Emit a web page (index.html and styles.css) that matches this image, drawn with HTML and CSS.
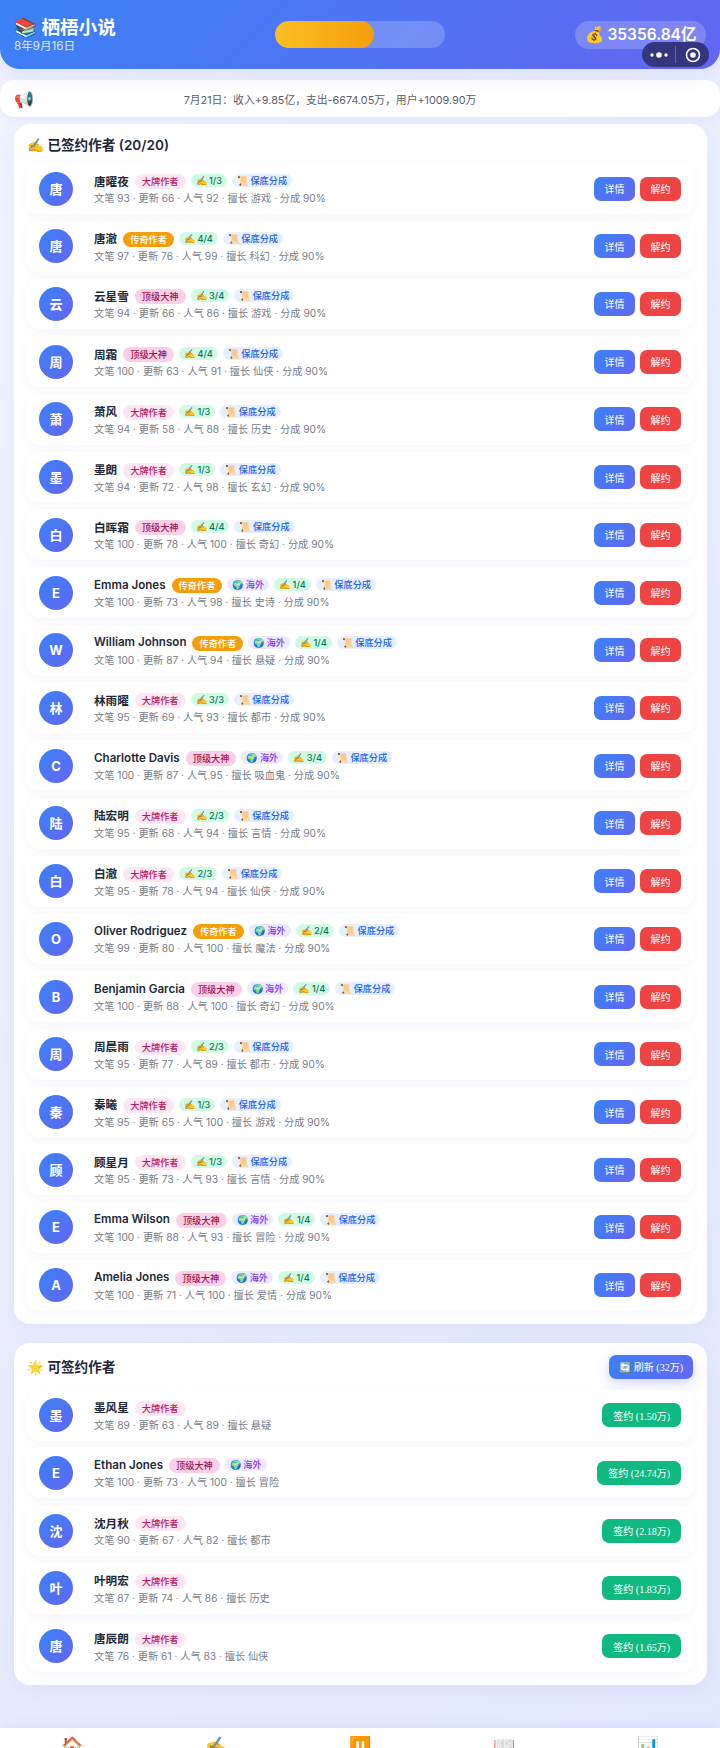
FILE: index.html
```html
<!DOCTYPE html>
<html lang="zh">
<head>
<meta charset="utf-8">
<title>栖梧小说</title>
<link rel="stylesheet" href="styles.css">
</head>
<body>
<header class="hdr">
  <div class="brand"><div class="logo">📚 栖梧小说</div><div class="date">8年9月16日</div></div>
  <div class="prog"><div class="prog-fill"></div></div>
  <div class="money">💰 35356.84亿</div>
  <div class="capsule">
    <svg class="cap-dots" width="20" height="8" viewBox="0 0 20 8"><circle cx="3" cy="4" r="1.7" fill="#fff"/><circle cx="10" cy="4" r="2.8" fill="#fff"/><circle cx="17" cy="4" r="1.7" fill="#fff"/></svg>
    <span class="cap-sep"></span>
    <svg class="cap-rec" width="16" height="16" viewBox="0 0 16 16"><circle cx="8" cy="8" r="6.5" fill="none" stroke="#fff" stroke-width="1.6"/><circle cx="8" cy="8" r="2.8" fill="#fff"/></svg>
  </div>
</header>
<div class="notice"><span class="notice-ic">📢</span><span class="notice-tx">7月21日：收入+9.85亿，支出-6674.05万，用户+1009.90万</span></div>
<section class="panel">
  <h2 class="ptitle">✍️ 已签约作者 (20/20)</h2>
  <div class="list">
    <div class="card"><div class="av">唐</div><div class="info"><div class="line"><span class="nm">唐曜夜</span><span class="tg t-big">大牌作者</span><span class="tg t-sign">✍️ 1/3</span><span class="tg t-gua">📜 保底分成</span></div><div class="sub">文笔 93 · 更新 66 · 人气 92 · 擅长 游戏 · 分成 90%</div></div><button class="btn b-blue">详情</button><button class="btn b-red">解约</button></div>
    <div class="card"><div class="av">唐</div><div class="info"><div class="line"><span class="nm">唐澈</span><span class="tg t-leg">传奇作者</span><span class="tg t-sign">✍️ 4/4</span><span class="tg t-gua">📜 保底分成</span></div><div class="sub">文笔 97 · 更新 76 · 人气 99 · 擅长 科幻 · 分成 90%</div></div><button class="btn b-blue">详情</button><button class="btn b-red">解约</button></div>
    <div class="card"><div class="av">云</div><div class="info"><div class="line"><span class="nm">云星雪</span><span class="tg t-top">顶级大神</span><span class="tg t-sign">✍️ 3/4</span><span class="tg t-gua">📜 保底分成</span></div><div class="sub">文笔 94 · 更新 66 · 人气 86 · 擅长 游戏 · 分成 90%</div></div><button class="btn b-blue">详情</button><button class="btn b-red">解约</button></div>
    <div class="card"><div class="av">周</div><div class="info"><div class="line"><span class="nm">周霜</span><span class="tg t-top">顶级大神</span><span class="tg t-sign">✍️ 4/4</span><span class="tg t-gua">📜 保底分成</span></div><div class="sub">文笔 100 · 更新 63 · 人气 91 · 擅长 仙侠 · 分成 90%</div></div><button class="btn b-blue">详情</button><button class="btn b-red">解约</button></div>
    <div class="card"><div class="av">萧</div><div class="info"><div class="line"><span class="nm">萧风</span><span class="tg t-big">大牌作者</span><span class="tg t-sign">✍️ 1/3</span><span class="tg t-gua">📜 保底分成</span></div><div class="sub">文笔 94 · 更新 58 · 人气 88 · 擅长 历史 · 分成 90%</div></div><button class="btn b-blue">详情</button><button class="btn b-red">解约</button></div>
    <div class="card"><div class="av">墨</div><div class="info"><div class="line"><span class="nm">墨朗</span><span class="tg t-big">大牌作者</span><span class="tg t-sign">✍️ 1/3</span><span class="tg t-gua">📜 保底分成</span></div><div class="sub">文笔 94 · 更新 72 · 人气 98 · 擅长 玄幻 · 分成 90%</div></div><button class="btn b-blue">详情</button><button class="btn b-red">解约</button></div>
    <div class="card"><div class="av">白</div><div class="info"><div class="line"><span class="nm">白晖霜</span><span class="tg t-top">顶级大神</span><span class="tg t-sign">✍️ 4/4</span><span class="tg t-gua">📜 保底分成</span></div><div class="sub">文笔 100 · 更新 78 · 人气 100 · 擅长 奇幻 · 分成 90%</div></div><button class="btn b-blue">详情</button><button class="btn b-red">解约</button></div>
    <div class="card"><div class="av">E</div><div class="info"><div class="line"><span class="nm">Emma Jones</span><span class="tg t-leg">传奇作者</span><span class="tg t-sea">🌍 海外</span><span class="tg t-sign">✍️ 1/4</span><span class="tg t-gua">📜 保底分成</span></div><div class="sub">文笔 100 · 更新 73 · 人气 98 · 擅长 史诗 · 分成 90%</div></div><button class="btn b-blue">详情</button><button class="btn b-red">解约</button></div>
    <div class="card"><div class="av">W</div><div class="info"><div class="line"><span class="nm">William Johnson</span><span class="tg t-leg">传奇作者</span><span class="tg t-sea">🌍 海外</span><span class="tg t-sign">✍️ 1/4</span><span class="tg t-gua">📜 保底分成</span></div><div class="sub">文笔 100 · 更新 87 · 人气 94 · 擅长 悬疑 · 分成 90%</div></div><button class="btn b-blue">详情</button><button class="btn b-red">解约</button></div>
    <div class="card"><div class="av">林</div><div class="info"><div class="line"><span class="nm">林雨曜</span><span class="tg t-big">大牌作者</span><span class="tg t-sign">✍️ 3/3</span><span class="tg t-gua">📜 保底分成</span></div><div class="sub">文笔 95 · 更新 69 · 人气 93 · 擅长 都市 · 分成 90%</div></div><button class="btn b-blue">详情</button><button class="btn b-red">解约</button></div>
    <div class="card"><div class="av">C</div><div class="info"><div class="line"><span class="nm">Charlotte Davis</span><span class="tg t-top">顶级大神</span><span class="tg t-sea">🌍 海外</span><span class="tg t-sign">✍️ 3/4</span><span class="tg t-gua">📜 保底分成</span></div><div class="sub">文笔 100 · 更新 87 · 人气 95 · 擅长 吸血鬼 · 分成 90%</div></div><button class="btn b-blue">详情</button><button class="btn b-red">解约</button></div>
    <div class="card"><div class="av">陆</div><div class="info"><div class="line"><span class="nm">陆宏明</span><span class="tg t-big">大牌作者</span><span class="tg t-sign">✍️ 2/3</span><span class="tg t-gua">📜 保底分成</span></div><div class="sub">文笔 95 · 更新 68 · 人气 94 · 擅长 言情 · 分成 90%</div></div><button class="btn b-blue">详情</button><button class="btn b-red">解约</button></div>
    <div class="card"><div class="av">白</div><div class="info"><div class="line"><span class="nm">白澈</span><span class="tg t-big">大牌作者</span><span class="tg t-sign">✍️ 2/3</span><span class="tg t-gua">📜 保底分成</span></div><div class="sub">文笔 95 · 更新 78 · 人气 94 · 擅长 仙侠 · 分成 90%</div></div><button class="btn b-blue">详情</button><button class="btn b-red">解约</button></div>
    <div class="card"><div class="av">O</div><div class="info"><div class="line"><span class="nm">Oliver Rodriguez</span><span class="tg t-leg">传奇作者</span><span class="tg t-sea">🌍 海外</span><span class="tg t-sign">✍️ 2/4</span><span class="tg t-gua">📜 保底分成</span></div><div class="sub">文笔 99 · 更新 80 · 人气 100 · 擅长 魔法 · 分成 90%</div></div><button class="btn b-blue">详情</button><button class="btn b-red">解约</button></div>
    <div class="card"><div class="av">B</div><div class="info"><div class="line"><span class="nm">Benjamin Garcia</span><span class="tg t-top">顶级大神</span><span class="tg t-sea">🌍 海外</span><span class="tg t-sign">✍️ 1/4</span><span class="tg t-gua">📜 保底分成</span></div><div class="sub">文笔 100 · 更新 88 · 人气 100 · 擅长 奇幻 · 分成 90%</div></div><button class="btn b-blue">详情</button><button class="btn b-red">解约</button></div>
    <div class="card"><div class="av">周</div><div class="info"><div class="line"><span class="nm">周晨雨</span><span class="tg t-big">大牌作者</span><span class="tg t-sign">✍️ 2/3</span><span class="tg t-gua">📜 保底分成</span></div><div class="sub">文笔 95 · 更新 77 · 人气 89 · 擅长 都市 · 分成 90%</div></div><button class="btn b-blue">详情</button><button class="btn b-red">解约</button></div>
    <div class="card"><div class="av">秦</div><div class="info"><div class="line"><span class="nm">秦曦</span><span class="tg t-big">大牌作者</span><span class="tg t-sign">✍️ 1/3</span><span class="tg t-gua">📜 保底分成</span></div><div class="sub">文笔 95 · 更新 65 · 人气 100 · 擅长 游戏 · 分成 90%</div></div><button class="btn b-blue">详情</button><button class="btn b-red">解约</button></div>
    <div class="card"><div class="av">顾</div><div class="info"><div class="line"><span class="nm">顾星月</span><span class="tg t-big">大牌作者</span><span class="tg t-sign">✍️ 1/3</span><span class="tg t-gua">📜 保底分成</span></div><div class="sub">文笔 95 · 更新 73 · 人气 93 · 擅长 言情 · 分成 90%</div></div><button class="btn b-blue">详情</button><button class="btn b-red">解约</button></div>
    <div class="card"><div class="av">E</div><div class="info"><div class="line"><span class="nm">Emma Wilson</span><span class="tg t-top">顶级大神</span><span class="tg t-sea">🌍 海外</span><span class="tg t-sign">✍️ 1/4</span><span class="tg t-gua">📜 保底分成</span></div><div class="sub">文笔 100 · 更新 88 · 人气 93 · 擅长 冒险 · 分成 90%</div></div><button class="btn b-blue">详情</button><button class="btn b-red">解约</button></div>
    <div class="card"><div class="av">A</div><div class="info"><div class="line"><span class="nm">Amelia Jones</span><span class="tg t-top">顶级大神</span><span class="tg t-sea">🌍 海外</span><span class="tg t-sign">✍️ 1/4</span><span class="tg t-gua">📜 保底分成</span></div><div class="sub">文笔 100 · 更新 71 · 人气 100 · 擅长 爱情 · 分成 90%</div></div><button class="btn b-blue">详情</button><button class="btn b-red">解约</button></div>
  </div>
</section>
<section class="panel panel-2">
  <div class="phead"><h2 class="ptitle ptitle-flat">🌟 可签约作者</h2><button class="btn btn-refresh">🔄 刷新 (32万)</button></div>
  <div class="list">
    <div class="card"><div class="av">墨</div><div class="info"><div class="line"><span class="nm">墨风星</span><span class="tg t-big">大牌作者</span></div><div class="sub">文笔 89 · 更新 63 · 人气 89 · 擅长 悬疑</div></div><button class="btn b-green">签约 (1.50万)</button></div>
    <div class="card"><div class="av">E</div><div class="info"><div class="line"><span class="nm">Ethan Jones</span><span class="tg t-top">顶级大神</span><span class="tg t-sea">🌍 海外</span></div><div class="sub">文笔 100 · 更新 73 · 人气 100 · 擅长 冒险</div></div><button class="btn b-green">签约 (24.74万)</button></div>
    <div class="card"><div class="av">沈</div><div class="info"><div class="line"><span class="nm">沈月秋</span><span class="tg t-big">大牌作者</span></div><div class="sub">文笔 90 · 更新 67 · 人气 82 · 擅长 都市</div></div><button class="btn b-green">签约 (2.18万)</button></div>
    <div class="card"><div class="av">叶</div><div class="info"><div class="line"><span class="nm">叶明宏</span><span class="tg t-big">大牌作者</span></div><div class="sub">文笔 87 · 更新 74 · 人气 86 · 擅长 历史</div></div><button class="btn b-green">签约 (1.83万)</button></div>
    <div class="card"><div class="av">唐</div><div class="info"><div class="line"><span class="nm">唐辰朗</span><span class="tg t-big">大牌作者</span></div><div class="sub">文笔 76 · 更新 61 · 人气 83 · 擅长 仙侠</div></div><button class="btn b-green">签约 (1.65万)</button></div>
  </div>
</section>
<nav class="nav"><span>🏠</span><span>✍️</span><span>⏸️</span><span>📖</span><span>📊</span></nav>
</body>
</html>
```

FILE: styles.css
```css
* { box-sizing: border-box; margin: 0; padding: 0; }
html, body { height: 1748px; overflow: hidden; }
body {
  width: 720px;
  background: linear-gradient(135deg, #f0f4ff 0%, #e2e8fc 100%);
  font-family: Inter, "Noto Sans CJK SC", sans-serif;
  color: #1f2937;
  position: relative;
}
.hdr {
  position: relative;
  height: 69px;
  background: linear-gradient(135deg, #3b82f6 0%, #6366f1 100%);
  border-radius: 0 0 20px 20px;
  box-shadow: 0 4px 20px rgba(99, 102, 241, .15);
  display: flex;
  align-items: center;
  padding: 0 14px;
  color: #fff;
}
.brand { width: 261px; }
.logo { font-size: 18.6px; font-weight: 700; line-height: 22px; white-space: nowrap; }
.date { font-size: 11.6px; line-height: 14px; margin-top: 1px; opacity: .8; }
.prog { width: 170px; height: 27px; border-radius: 14px; background: rgba(255, 255, 255, .2); overflow: hidden; }
.prog-fill { width: 58%; height: 100%; border-radius: 14px; background: linear-gradient(90deg, #fbbf24, #f59e0b); }
.money {
  margin-left: auto;
  width: 131px;
  height: 28px;
  border-radius: 14px;
  background: rgba(255, 255, 255, .2);
  font-size: 15.5px;
  font-weight: 600;
  line-height: 28px;
  text-align: center;
  white-space: nowrap;
}
.capsule {
  position: absolute;
  left: 642px;
  top: 42px;
  width: 67px;
  height: 25px;
  border-radius: 13px;
  background: #34357f;
  display: flex;
  align-items: center;
}
.cap-dots { margin-left: 7px; }
.cap-sep { width: 1px; height: 17px; margin-left: 6px; background: rgba(255, 255, 255, .25); }
.cap-rec { margin-left: 9px; }
.notice {
  margin-top: 11px;
  height: 37px;
  background: #fff;
  border-radius: 14px;
  display: flex;
  align-items: center;
  padding: 0 100px 0 14px;
  box-shadow: 0 2px 8px rgba(99, 102, 241, .08);
}
.notice-ic { font-size: 16px; width: 26px; }
.notice-tx { flex: 1; text-align: center; font-size: 10.8px; color: #595f69; white-space: nowrap; }
.panel {
  margin: 7px 13px 0 14px;
  padding: 11px 13px 13px;
  background: #fff;
  border-radius: 16px;
  box-shadow: 0 4px 20px rgba(99, 102, 241, .08);
}
.panel-2 { margin-top: 19px; padding-top: 12px; }
.ptitle { font-size: 13.6px; font-weight: 600; line-height: 20px; color: #1f2937; margin-bottom: 8px; white-space: nowrap; }
.ptitle-flat { margin-bottom: 0; }
.phead { display: flex; justify-content: space-between; align-items: center; margin-bottom: 11px; }
.list { display: flex; flex-direction: column; gap: 6.73px; }
.card {
  height: 51px;
  display: flex;
  align-items: center;
  gap: 5px;
  padding: 0 13px 0 12px;
  background: #fff;
  border-radius: 12px;
  box-shadow: 0 2px 8px rgba(99, 102, 241, .06);
}
.av {
  width: 34px;
  height: 34px;
  flex: none;
  margin-right: 16px;
  border-radius: 50%;
  background: linear-gradient(135deg, #3b82f6, #6366f1);
  color: #fff;
  font-size: 13px;
  font-weight: 700;
  line-height: 34px;
  text-align: center;
}
.info { flex: 1; min-width: 0; padding-top: 1px; }
.line { display: flex; align-items: center; gap: 5px; height: 17px; }
.nm { font-size: 11.6px; font-weight: 600; color: #1f2937; margin-right: 1px; white-space: nowrap; }
.tg { font-size: 9.2px; line-height: 13px; height: 13px; padding: 0 5px; border-radius: 7px; white-space: nowrap; font-weight: 500; }
.t-big, .t-top, .t-leg { height: 15px; line-height: 15px; padding: 0 7px; margin-top: 2px; border-radius: 8px; }
.t-big { background: #fce7f3; color: #be185d; }
.t-top { background: #fbcfe8; color: #9d174d; }
.t-leg { background: #f59e0b; color: #fff; }
.t-sea { background: #ede9fe; color: #7c3aed; }
.t-sign { background: #d1fae5; color: #047857; }
.t-gua { background: #e6efff; color: #2563eb; }
.sub { font-size: 10.2px; line-height: 15px; margin-top: 2px; color: #777d87; white-space: nowrap; }
.btn {
  flex: none;
  height: 24px;
  border: 0;
  border-radius: 7px;
  color: #fff;
  font-size: 10px;
  font-family: "Liberation Serif", "Noto Sans CJK SC", serif;
}
.b-blue { width: 41px; background: linear-gradient(135deg, #3b82f6, #6366f1); }
.b-red { width: 41px; background: #ef4444; }
.b-green { padding: 0 11px; background: #10b981; }
.btn-refresh {
  height: 24px;
  padding: 0 10px;
  margin-right: 1px;
  background: linear-gradient(135deg, #3b82f6, #6366f1);
  box-shadow: 0 4px 12px rgba(99, 102, 241, .3);
}
.nav {
  height: 60px;
  margin-top: 43px;
  background: #fff;
  display: grid;
  grid-template-columns: repeat(5, 1fr);
  justify-items: center;
  padding-top: 6px;
  font-size: 18px;
  line-height: 24px;
  box-shadow: 0 -2px 10px rgba(99, 102, 241, .08);
}
```
